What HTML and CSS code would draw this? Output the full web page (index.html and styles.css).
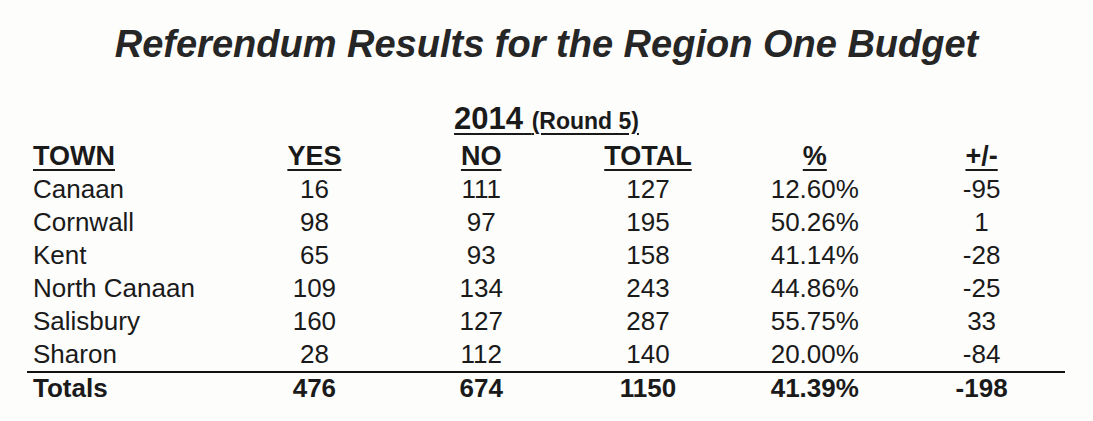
FILE: index.html
```html
<!DOCTYPE html>
<html lang=en><head>
<meta charset=UTF-8>
<meta name=viewport content="width=device-width,initial-scale=1">
<title>Referendum Results for the Region One Budget</title><link rel="stylesheet" href="styles.css"></head><body>
<div class=sheet>
<h1>Referendum Results for the Region One Budget</h1>
<h2><span class=year>2014</span> <span class=round>(Round 5)</span></h2>
<table class=results>
<colgroup><col class=c-town><col><col><col><col><col></colgroup>
<thead><tr><th class=town><u>TOWN</u></th><th><u>YES</u></th><th><u>NO</u></th><th><u>TOTAL</u></th><th><u>%</u></th><th><u>+/-</u></th></tr></thead>
<tbody>
<tr><td class=town>Canaan</td><td>16</td><td>111</td><td>127</td><td>12.60%</td><td>-95</td></tr>
<tr><td class=town>Cornwall</td><td>98</td><td>97</td><td>195</td><td>50.26%</td><td>1</td></tr>
<tr><td class=town>Kent</td><td>65</td><td>93</td><td>158</td><td>41.14%</td><td>-28</td></tr>
<tr><td class=town>North Canaan</td><td>109</td><td>134</td><td>243</td><td>44.86%</td><td>-25</td></tr>
<tr><td class=town>Salisbury</td><td>160</td><td>127</td><td>287</td><td>55.75%</td><td>33</td></tr>
<tr><td class=town>Sharon</td><td>28</td><td>112</td><td>140</td><td>20.00%</td><td>-84</td></tr>
</tbody>
<tfoot><tr><td class=town>Totals</td><td>476</td><td>674</td><td>1150</td><td>41.39%</td><td>-198</td></tr></tfoot>
</table>
</div>
</body></html>
```
FILE: styles.css
```css
body{margin:0;background:#fdfdfc;color:#1a1a1a;font-family:"Liberation Sans",Arial,sans-serif}
.sheet{width:1093px;padding-top:22px}
h1{margin:0;font-size:38px;line-height:44px;font-weight:700;font-style:italic;text-align:center;color:#262626}
h2{margin:36px 0 2px;font-size:31px;line-height:34px;font-weight:700;text-align:center;text-decoration:underline;text-decoration-thickness:2px;text-underline-offset:4px}
h2 .round{font-size:23px}
.results{margin-left:27px;width:1038px;border-collapse:collapse;table-layout:fixed;font-size:26px}
.c-town{width:204px}
.results th,.results td{padding:0;line-height:33px;text-align:center;white-space:nowrap}
.results th{font-weight:700;font-size:27px}
.results u{text-decoration-thickness:2px;text-underline-offset:4px}
.results .town{text-align:left;padding-left:6px}
.results tfoot td{font-weight:700;line-height:30px;border-top:2px solid #111}
```
